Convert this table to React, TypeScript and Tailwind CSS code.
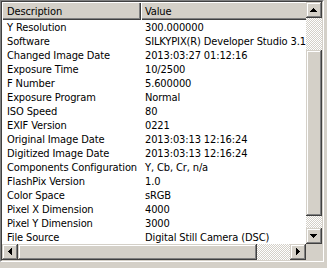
import React from "react";

const rows: [string, string][] = [
  ["Y Resolution", "300.000000"],
  ["Software", "SILKYPIX(R) Developer Studio 3.1"],
  ["Changed Image Date", "2013:03:27 01:12:16"],
  ["Exposure Time", "10/2500"],
  ["F Number", "5.600000"],
  ["Exposure Program", "Normal"],
  ["ISO Speed", "80"],
  ["EXIF Version", "0221"],
  ["Original Image Date", "2013:03:13 12:16:24"],
  ["Digitized Image Date", "2013:03:13 12:16:24"],
  ["Components Configuration", "Y, Cb, Cr, n/a"],
  ["FlashPix Version", "1.0"],
  ["Color Space", "sRGB"],
  ["Pixel X Dimension", "4000"],
  ["Pixel Y Dimension", "3000"],
  ["File Source", "Digital Still Camera (DSC)"],
];

const raised =
  "bg-[#d4d0c8] shadow-[inset_-1px_-1px_#404040,inset_1px_1px_#d4d0c8,inset_-2px_-2px_#808080,inset_2px_2px_#ffffff]";

const headerItem =
  "shrink-0 flex items-center pt-[2px] bg-[#d4d0c8] shadow-[inset_1px_1px_#ffffff,inset_-1px_-1px_#404040,inset_-2px_-2px_#808080]";

const track =
  "bg-[image:conic-gradient(#d4d0c8_25%,#ffffff_0_50%,#d4d0c8_0_75%,#ffffff_0)] bg-[length:2px_2px]";

type Dir = "up" | "down" | "left" | "right";

const arrowPaths: Record<Dir, { w: number; h: number; d: string }> = {
  up: { w: 7, h: 4, d: "M3 0h1v1H3zM2 1h3v1H2zM1 2h5v1H1zM0 3h7v1H0z" },
  down: { w: 7, h: 4, d: "M0 0h7v1H0zM1 1h5v1H1zM2 2h3v1H2zM3 3h1v1H3z" },
  left: { w: 4, h: 7, d: "M3 0h1v7H3zM2 1h1v5H2zM1 2h1v3H1zM0 3h1v1H0z" },
  right: { w: 4, h: 7, d: "M0 0h1v7H0zM1 1h1v5H1zM2 2h1v3H2zM3 3h1v1H3z" },
};

function ArrowButton({ dir }: { dir: Dir }) {
  const a = arrowPaths[dir];
  return (
    <div className={`w-[16px] h-[16px] shrink-0 flex items-center justify-center ${raised}`}>
      <svg width={a.w} height={a.h} viewBox={`0 0 ${a.w} ${a.h}`} shapeRendering="crispEdges" className="-mt-px -ml-px">
        <path d={a.d} fill="#000" />
      </svg>
    </div>
  );
}

export default function App() {
  return (
    <div className="w-[327px] h-[268px] bg-[#d4d0c8] text-[11px] tracking-[-0.12px] text-black [font-family:'DejaVu_Sans_Condensed',_'Liberation_Sans',_sans-serif] overflow-hidden">
      {/* sunken client edge */}
      <div className="w-[324px] h-[262px] border border-t-[#808080] border-l-[#808080] border-b-white border-r-white">
        <div className="w-full h-full border border-t-[#404040] border-l-[#404040] border-b-[#d4d0c8] border-r-[#d4d0c8] grid grid-cols-[304px_16px] grid-rows-[242px_16px]">
          {/* list body */}
          <div className="bg-white overflow-hidden flex flex-col">
            <div className="flex h-[18px] shrink-0">
              <div className={`w-[139px] pl-[5px] ${headerItem}`}>Description</div>
              <div className={`w-[207px] pl-[4px] ${headerItem}`}>Value</div>
            </div>
            {rows.map(([k, v]) => (
              <div key={k} className="flex h-[14px] pt-px leading-[14px] whitespace-nowrap shrink-0">
                <div className="w-[139px] shrink-0 pl-[5px] overflow-hidden">{k}</div>
                <div className="shrink-0 pl-[4px]">{v}</div>
              </div>
            ))}
          </div>

          {/* vertical scroll bar */}
          <div className="flex flex-col">
            <ArrowButton dir="up" />
            <div className={`flex-1 flex flex-col ${track}`}>
              <div className={`mt-[32px] h-[166px] ${raised}`} />
            </div>
            <ArrowButton dir="down" />
          </div>

          {/* horizontal scroll bar */}
          <div className="flex">
            <ArrowButton dir="left" />
            <div className={`flex-1 flex ${track}`}>
              <div className={`w-[239px] h-full ${raised}`} />
            </div>
            <ArrowButton dir="right" />
          </div>

          <div className="bg-[#d4d0c8]" />
        </div>
      </div>
    </div>
  );
}
